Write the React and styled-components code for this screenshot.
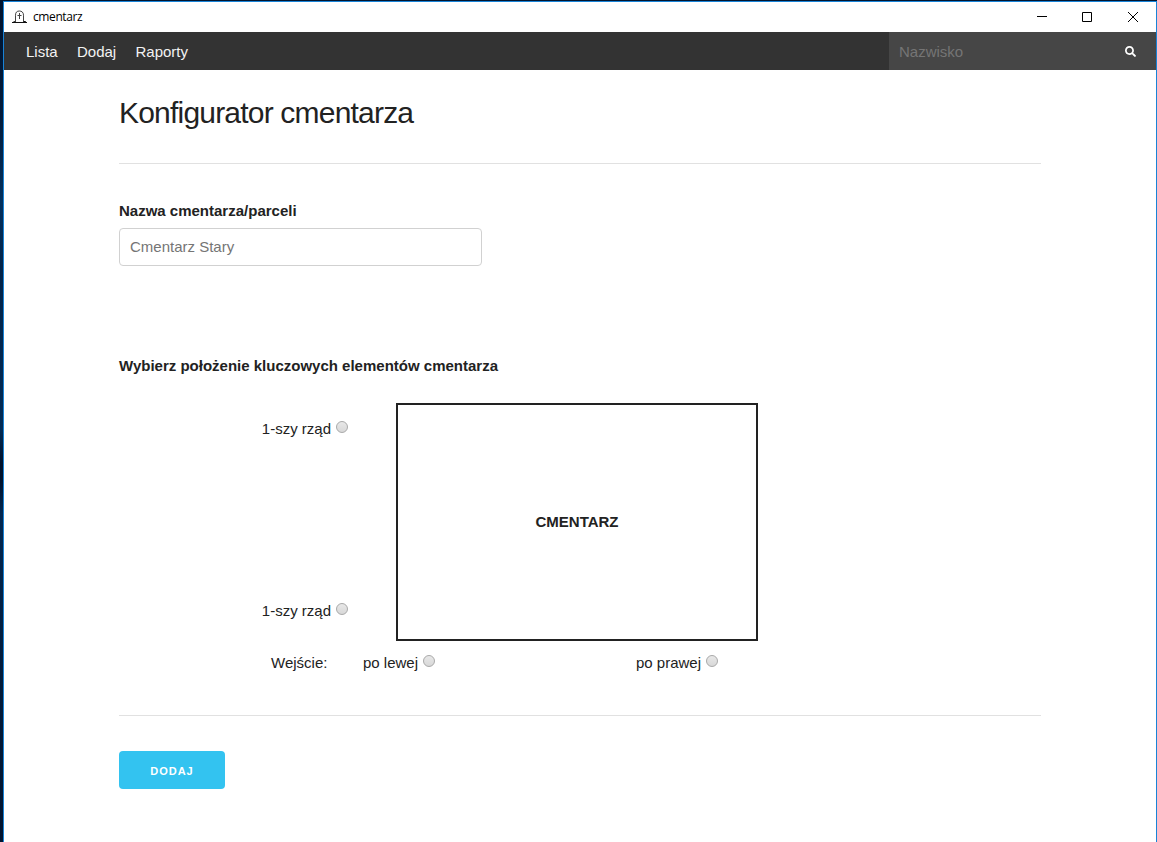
import React from "react";
import styled, { createGlobalStyle } from "styled-components";
import { FaSearch } from "react-icons/fa";

const GlobalStyle = createGlobalStyle`
  *, *::before, *::after { box-sizing: border-box; }
  body {
    margin: 0;
    color: #222;
    font: 400 15px/24px "Liberation Sans", Arial, sans-serif;
    overflow: hidden;
  }
`;

const Desktop = styled.div`
  height: 842px;
  padding: 1px 0 0 3px;
  background: linear-gradient(180deg, #01142f 0%, #011c3d 14%, #02305e 24%, #012349 32%, #012a55 51%, #00122c 55%, #00122c 57%, #012751 61%, #011b3b 80%, #01142f 100%);
`;

const Window = styled.div`
  height: 841px;
  display: flex;
  flex-direction: column;
  border: 1px solid #1883d7;
  border-bottom: 0;
  background: #fff;
`;

const TitleBar = styled.header`
  height: 30px;
  flex: none;
  display: flex;
  align-items: center;
  padding-left: 8px;
  color: #000;
`;

const TitleText = styled.span`
  flex: 1;
  margin-left: 6px;
  font: 12px/16px "Open Sans", "Noto Sans", sans-serif;
  letter-spacing: -0.4px;
`;

const WindowControl = styled.span`
  width: ${(p) => p.$width}px;
  height: 30px;
  display: flex;
  align-items: center;
  justify-content: center;
  padding-bottom: 1px;
`;

const NavBar = styled.nav`
  height: 38px;
  flex: none;
  display: flex;
  align-items: center;
  padding-left: 22px;
  background: #333;
`;

const NavLinks = styled.div`
  flex: 1;
  display: flex;
  gap: 19.3px;
  padding-top: 1px;
`;

const NavLink = styled.a`
  color: #f2f2f2;
`;

const Search = styled.div`
  width: 267px;
  height: 38px;
  display: flex;
  align-items: center;
  justify-content: space-between;
  padding: 1px 20px 0 10px;
  background: #464646;
  color: #fff;
`;

const SearchInput = styled.input`
  width: 180px;
  padding: 0;
  border: 0;
  outline: 0;
  background: transparent;
  font: inherit;
  color: #fff;
  &::placeholder { color: #757575; opacity: 1; }
`;

const Page = styled.main`
  width: 922px;
  margin-left: 115px;
`;

const Heading = styled.h1`
  margin: 0;
  padding-top: 20px;
  font-size: 30px;
  font-weight: 400;
  line-height: 45px;
  letter-spacing: -0.8px;
`;

const Divider = styled.hr`
  height: 1px;
  margin: ${(p) => p.$top}px 0 ${(p) => p.$bottom}px;
  border: 0;
  background: #e1e1e1;
`;

const FieldLabel = styled.label`
  display: block;
  font-weight: 700;
`;

const TextInput = styled.input`
  display: block;
  width: 363px;
  height: 38px;
  margin: 5px 0 88px;
  padding: 5px 10px 7px;
  border: 1px solid #d1d1d1;
  border-radius: 4px;
  outline: 0;
  font: inherit;
  &::placeholder { color: #757575; opacity: 1; }
`;

const Plan = styled.section`
  display: flex;
  margin-top: 25px;
`;

const RowOptions = styled.div`
  width: 229px;
  height: 238px;
  margin-right: 48px;
  padding: 14px 0 18px;
  display: flex;
  flex-direction: column;
  align-items: flex-end;
  justify-content: space-between;
`;

const Option = styled.label`
  display: flex;
  align-items: center;
  gap: 5px;
  white-space: nowrap;
`;

const Radio = styled.input`
  appearance: none;
  width: 12px;
  height: 12px;
  margin: 0 0 4px;
  border: 1px solid #a9a9a9;
  border-radius: 50%;
  background: linear-gradient(#e8e8e8, #d8d8d8);
`;

const Plot = styled.div`
  width: 362px;
  height: 238px;
  display: flex;
  align-items: center;
  justify-content: center;
  border: 2px solid #222;
  font-weight: 700;
`;

const EntranceRow = styled.div`
  display: flex;
  margin-top: 10px;
  padding-left: 152px;
`;

const EntranceCell = styled.div`
  width: ${(p) => p.$width}px;
`;

const SubmitButton = styled.button`
  display: block;
  width: 106px;
  height: 38px;
  padding: 2px 0 0;
  border: 0;
  border-radius: 4px;
  background: #33c3f0;
  color: #fff;
  font: 700 11px/36px "Liberation Sans", Arial, sans-serif;
  letter-spacing: 1px;
  text-transform: uppercase;
`;

const TombIcon = () => (
  <svg width="15" height="14" viewBox="0 0 15 14" fill="none" stroke="#444">
    <path d="M3.5 12V5.2C3.5 2.2 5 1 7.3 1s4.2 1.2 4.2 4.2V12" />
    <path d="M0 12.5h15M1.5 11.7h1.5M11.8 11.5h2" stroke="#111" />
    <path d="M7.5 3v6M5.5 5.5h4" />
  </svg>
);

const RadioOption = ({ label, name }) => (
  <Option>
    {label}
    <Radio type="radio" name={name} />
  </Option>
);

export default function App() {
  return (
    <Desktop>
      <GlobalStyle />
      <Window>
        <TitleBar>
          <TombIcon />
          <TitleText>cmentarz</TitleText>
          <WindowControl $width={46}>
            <svg width="10" height="10" stroke="#000"><path d="M0 4.5h10" /></svg>
          </WindowControl>
          <WindowControl $width={44}>
            <svg width="10" height="10" fill="none" stroke="#000"><path d="M.5 .5h9v9h-9z" /></svg>
          </WindowControl>
          <WindowControl $width={47}>
            <svg width="10" height="10" stroke="#000"><path d="M0 0l10 10M10 0L0 10" /></svg>
          </WindowControl>
        </TitleBar>
        <NavBar>
          <NavLinks>
            <NavLink>Lista</NavLink>
            <NavLink>Dodaj</NavLink>
            <NavLink>Raporty</NavLink>
          </NavLinks>
          <Search>
            <SearchInput placeholder="Nazwisko" />
            <FaSearch size={11} />
          </Search>
        </NavBar>
        <Page>
          <Heading>Konfigurator cmentarza</Heading>
          <Divider $top={28} $bottom={35} />
          <FieldLabel htmlFor="name">Nazwa cmentarza/parceli</FieldLabel>
          <TextInput id="name" placeholder="Cmentarz Stary" />
          <FieldLabel as="div">Wybierz położenie kluczowych elementów cmentarza</FieldLabel>
          <Plan>
            <RowOptions>
              <RadioOption label="1-szy rząd" name="row" />
              <RadioOption label="1-szy rząd" name="row" />
            </RowOptions>
            <Plot>CMENTARZ</Plot>
          </Plan>
          <EntranceRow>
            <EntranceCell $width={92}>Wejście:</EntranceCell>
            <EntranceCell $width={273}>
              <RadioOption label="po lewej" name="entrance" />
            </EntranceCell>
            <EntranceCell $width={90}>
              <RadioOption label="po prawej" name="entrance" />
            </EntranceCell>
          </EntranceRow>
          <Divider $top={40} $bottom={35} />
          <SubmitButton>Dodaj</SubmitButton>
        </Page>
      </Window>
    </Desktop>
  );
}
